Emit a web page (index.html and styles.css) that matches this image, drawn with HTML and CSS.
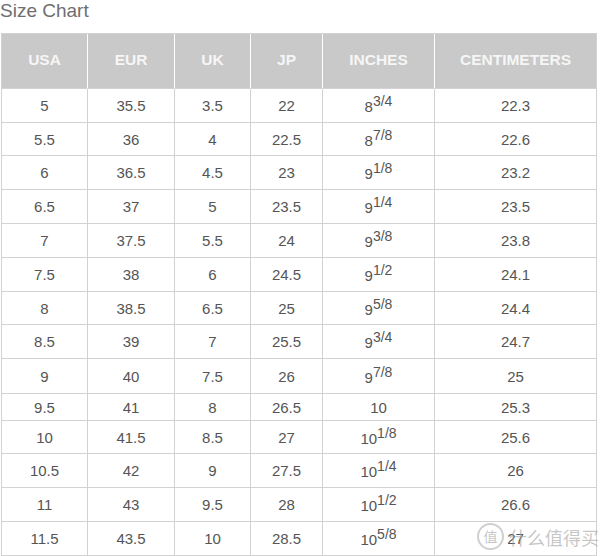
FILE: index.html
```html
<!DOCTYPE html>
<html>
<head>
<meta charset="utf-8">
<link rel="stylesheet" href="styles.css">
</head>
<body>
<div class="page">
  <div class="title">Size Chart</div>
  <table class="chart">
    <colgroup>
      <col class="c1"><col class="c2"><col class="c3"><col class="c4"><col class="c5"><col class="c6">
    </colgroup>
    <thead>
      <tr class="head"><th>USA</th><th>EUR</th><th>UK</th><th>JP</th><th>INCHES</th><th>CENTIMETERS</th></tr>
    </thead>
    <tbody>
      <tr class="h34"><td>5</td><td>35.5</td><td>3.5</td><td>22</td><td><span class="whole">8</span><sup>3/4</sup></td><td>22.3</td></tr>
      <tr class="h33"><td>5.5</td><td>36</td><td>4</td><td>22.5</td><td><span class="whole">8</span><sup>7/8</sup></td><td>22.6</td></tr>
      <tr class="h34"><td>6</td><td>36.5</td><td>4.5</td><td>23</td><td><span class="whole">9</span><sup>1/8</sup></td><td>23.2</td></tr>
      <tr class="h34"><td>6.5</td><td>37</td><td>5</td><td>23.5</td><td><span class="whole">9</span><sup>1/4</sup></td><td>23.5</td></tr>
      <tr class="h34"><td>7</td><td>37.5</td><td>5.5</td><td>24</td><td><span class="whole">9</span><sup>3/8</sup></td><td>23.8</td></tr>
      <tr class="h34"><td>7.5</td><td>38</td><td>6</td><td>24.5</td><td><span class="whole">9</span><sup>1/2</sup></td><td>24.1</td></tr>
      <tr class="h33"><td>8</td><td>38.5</td><td>6.5</td><td>25</td><td><span class="whole">9</span><sup>5/8</sup></td><td>24.4</td></tr>
      <tr class="h34"><td>8.5</td><td>39</td><td>7</td><td>25.5</td><td><span class="whole">9</span><sup>3/4</sup></td><td>24.7</td></tr>
      <tr class="h35"><td>9</td><td>40</td><td>7.5</td><td>26</td><td><span class="whole">9</span><sup>7/8</sup></td><td>25</td></tr>
      <tr class="h27"><td>9.5</td><td>41</td><td>8</td><td>26.5</td><td>10</td><td>25.3</td></tr>
      <tr class="h33"><td>10</td><td>41.5</td><td>8.5</td><td>27</td><td><span class="whole">10</span><sup>1/8</sup></td><td>25.6</td></tr>
      <tr class="h34"><td>10.5</td><td>42</td><td>9</td><td>27.5</td><td><span class="whole">10</span><sup>1/4</sup></td><td>26</td></tr>
      <tr class="h34"><td>11</td><td>43</td><td>9.5</td><td>28</td><td><span class="whole">10</span><sup>1/2</sup></td><td>26.6</td></tr>
      <tr class="h34"><td>11.5</td><td>43.5</td><td>10</td><td>28.5</td><td><span class="whole">10</span><sup>5/8</sup></td><td>27</td></tr>
    </tbody>
  </table>
  <div class="watermark"><div class="wm-circle">值</div><div class="wm-text">什么值得买</div></div>
</div>
</body>
</html>
```
FILE: styles.css
```css
html, body {
  margin: 0;
  padding: 0;
  background: #ffffff;
}
.page {
  position: relative;
  width: 600px;
  height: 556px;
  overflow: hidden;
  font-family: "Liberation Sans", Arial, sans-serif;
}
.title {
  height: 33px;
  font-size: 19px;
  line-height: 22px;
  color: #6e6e6e;
}
.chart {
  margin-left: 1px;
  width: 596px;
  table-layout: fixed;
  border-collapse: separate;
  border-spacing: 0;
  border-top: 1px solid #d2d2d2;
  border-left: 1px solid #d2d2d2;
}
.c1 { width: 86px; }
.c2 { width: 87px; }
.c3 { width: 76px; }
.c4 { width: 72px; }
.c5 { width: 112px; }
.c6 { width: 162px; }
.chart th, .chart td {
  padding: 0;
  text-align: center;
  vertical-align: middle;
  border-right: 1px solid #d2d2d2;
  border-bottom: 1px solid #d2d2d2;
}
.chart th {
  background: #c9c9c9;
  color: #f6f6f6;
  font-weight: bold;
  font-size: 15.5px;
  line-height: 17px;
  padding-bottom: 4px;
  border-right: 1px solid #ffffff;
  border-bottom: 1px solid #d2d2d2;
}
.chart th:last-child {
  border-right: 1px solid #d2d2d2;
}
.chart td {
  color: #555555;
  font-size: 15px;
  line-height: 17px;
}
.head { height: 55px; }
.h27 { height: 27px; }
.h33 { height: 33px; }
.h34 { height: 34px; }
.h35 { height: 35px; }
.whole {
  vertical-align: -2px;
  font-size: 15px;
}
.chart sup {
  font-size: 14px;
  line-height: 0;
  vertical-align: 4px;
}
.watermark {
  position: absolute;
  left: 477px;
  top: 523px;
  height: 27px;
  display: flex;
  align-items: center;
  gap: 5px;
  color: rgba(160, 160, 160, 0.6);
  font-family: "Noto Sans CJK SC", sans-serif;
}
.wm-circle {
  width: 23px;
  height: 23px;
  border: 2px solid rgba(160, 160, 160, 0.5);
  border-radius: 50%;
  font-size: 14px;
  line-height: 23px;
  text-align: center;
}
.wm-text {
  font-size: 18px;
  line-height: 22px;
  height: 22px;
}
```
